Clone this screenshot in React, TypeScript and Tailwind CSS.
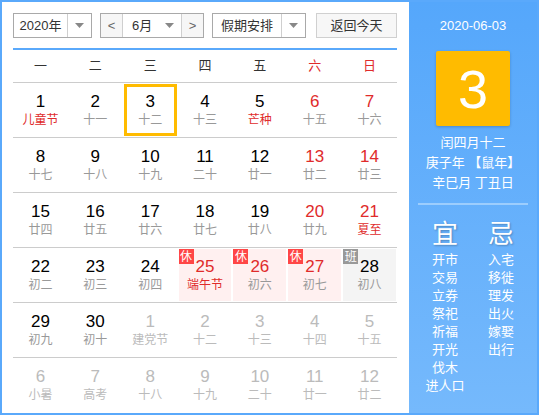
import React from "react";

type Day = {
  n: number;
  l: string;
  red?: boolean; // red day number
  redL?: boolean; // red lunar text
  off?: boolean; // other month
  tag?: "休" | "班";
  sel?: boolean;
};

const rows: Day[][] = [
  [
    { n: 1, l: "儿童节", redL: true },
    { n: 2, l: "十一" },
    { n: 3, l: "十二", sel: true },
    { n: 4, l: "十三" },
    { n: 5, l: "芒种", redL: true },
    { n: 6, l: "十五", red: true },
    { n: 7, l: "十六", red: true },
  ],
  [
    { n: 8, l: "十七" },
    { n: 9, l: "十八" },
    { n: 10, l: "十九" },
    { n: 11, l: "二十" },
    { n: 12, l: "廿一" },
    { n: 13, l: "廿二", red: true },
    { n: 14, l: "廿三", red: true },
  ],
  [
    { n: 15, l: "廿四" },
    { n: 16, l: "廿五" },
    { n: 17, l: "廿六" },
    { n: 18, l: "廿七" },
    { n: 19, l: "廿八" },
    { n: 20, l: "廿九", red: true },
    { n: 21, l: "夏至", red: true, redL: true },
  ],
  [
    { n: 22, l: "初二" },
    { n: 23, l: "初三" },
    { n: 24, l: "初四" },
    { n: 25, l: "端午节", red: true, redL: true, tag: "休" },
    { n: 26, l: "初六", red: true, tag: "休" },
    { n: 27, l: "初七", red: true, tag: "休" },
    { n: 28, l: "初八", tag: "班" },
  ],
  [
    { n: 29, l: "初九" },
    { n: 30, l: "初十" },
    { n: 1, l: "建党节", off: true },
    { n: 2, l: "十二", off: true },
    { n: 3, l: "十三", off: true },
    { n: 4, l: "十四", off: true },
    { n: 5, l: "十五", off: true },
  ],
  [
    { n: 6, l: "小暑", off: true },
    { n: 7, l: "高考", off: true },
    { n: 8, l: "十八", off: true },
    { n: 9, l: "十九", off: true },
    { n: 10, l: "二十", off: true },
    { n: 11, l: "廿一", off: true },
    { n: 12, l: "廿二", off: true },
  ],
];

const weekdays = ["一", "二", "三", "四", "五", "六", "日"];
const yi = ["开市", "交易", "立券", "祭祀", "祈福", "开光", "伐木", "进人口"];
const ji = ["入宅", "移徙", "理发", "出火", "嫁娶", "出行"];

function Caret() {
  return (
    <svg width="9" height="5" viewBox="0 0 9 5">
      <path d="M0 0h9L4.5 5z" fill="#888" />
    </svg>
  );
}

function Cell({ d }: { d: Day }) {
  const numColor = d.off ? "text-[#bbbbbb]" : d.red ? "text-[#e02b2b]" : "text-black";
  const lunColor = d.off ? "text-[#bbbbbb]" : d.redL ? "text-[#e02b2b]" : "text-[#999999]";
  const bg = d.tag === "休" ? "bg-[#fff0f0]" : d.tag === "班" ? "bg-[#f4f4f4]" : "";
  return (
    <div className="relative h-[54px] p-px">
      <div
        className={`relative flex h-full flex-col items-center justify-center ${bg} ${
          d.sel ? "border-[3px] border-[#ffbb00]" : ""
        }`}
      >
        {d.tag && (
          <span
            className={`absolute left-0 top-0 flex h-[15px] w-[15px] items-center justify-center text-[12px] leading-none text-white ${
              d.tag === "休" ? "bg-[#ff4646]" : "bg-[#999999]"
            }`}
          >
            {d.tag}
          </span>
        )}
        <span className={`mt-[1px] text-[17px] leading-[20px] ${numColor}`}>{d.n}</span>
        <span className={`text-[12px] leading-[17px] ${lunColor}`}>{d.l}</span>
      </div>
    </div>
  );
}

export default function App() {
  return (
    <div
      className="flex h-[415px] w-[539px] border-2 border-[#5aa9fb] bg-white"
      style={{ fontFamily: '"Liberation Sans", "Noto Sans CJK SC", sans-serif' }}
    >
      {/* Calendar */}
      <div className="flex w-[407px] flex-col pl-[11px] pr-[12px] pt-[11px]">
        <div className="flex h-[25px] text-[13px] text-[#333]">
          <div className="flex w-[79px] border border-[#a9a9a9]">
            <div className="flex flex-1 items-center justify-center">2020年</div>
            <div className="flex w-[24px] items-center justify-center border-l border-[#cfcfcf]">
              <Caret />
            </div>
          </div>
          <div className="ml-[8px] flex w-[104px] border border-[#a9a9a9]">
            <div className="flex w-[22px] items-center justify-center border-r border-[#cfcfcf] bg-[#f6f6f6] text-[#666]">
              &lt;
            </div>
            <div className="flex flex-1 items-center justify-between pl-[9px] pr-[7px]">
              <span>6月</span>
              <Caret />
            </div>
            <div className="flex w-[22px] items-center justify-center border-l border-[#cfcfcf] bg-[#f6f6f6] text-[#666]">
              &gt;
            </div>
          </div>
          <div className="ml-[8px] flex w-[94px] border border-[#a9a9a9]">
            <div className="flex flex-1 items-center justify-center">假期安排</div>
            <div className="flex w-[24px] items-center justify-center border-l border-[#cfcfcf]">
              <Caret />
            </div>
          </div>
          <div className="ml-[10px] flex w-[81px] items-center justify-center border border-[#d0d0d0] bg-[#f7f7f7]">
            返回今天
          </div>
        </div>

        <div className="mt-[10px] grid h-[34px] grid-cols-7 border-t-[2px] border-[#5aa9fb] text-[13px]">
          {weekdays.map((w, i) => (
            <div
              key={w}
              className={`flex items-center justify-center ${i >= 5 ? "text-[#e02b2b]" : "text-[#333]"}`}
            >
              {w}
            </div>
          ))}
        </div>

        {rows.map((r, ri) => (
          <div key={ri} className="grid grid-cols-7 border-t border-[#cccccc]">
            {r.map((d, di) => (
              <Cell key={di} d={d} />
            ))}
          </div>
        ))}
      </div>

      {/* Side panel */}
      <div className="flex flex-1 flex-col items-center bg-gradient-to-b from-[#55a7fb] to-[#75b9fc] text-white">
        <div className="mt-[15px] text-[13px] leading-[18px]">2020-06-03</div>
        <div className="mt-[16px] flex h-[75px] w-[74px] items-center justify-center rounded-[2px] bg-[#ffbb00] text-[54px] leading-none shadow-[0_1px_3px_rgba(0,0,0,0.2)]">
          3
        </div>
        <div className="mt-[7px] flex flex-col items-center text-[13px] leading-[20px]">
          <span>闰四月十二</span>
          <span>庚子年 【鼠年】</span>
          <span>辛巳月 丁丑日</span>
        </div>
        <div className="mt-[10px] h-[2px] w-[110px] bg-[#9ccdfd]" />
        <div className="mt-[14px] flex w-[112px]">
          <div className="flex w-1/2 flex-col items-center">
            <span className="text-[26px] leading-[30px] [text-shadow:1px_1px_2px_rgba(0,0,0,0.25)]">宜</span>
            <div className="mt-[2px] flex flex-col items-center text-[13px] leading-[18px]">
              {yi.map((t) => (
                <span key={t}>{t}</span>
              ))}
            </div>
          </div>
          <div className="flex w-1/2 flex-col items-center">
            <span className="text-[26px] leading-[30px] [text-shadow:1px_1px_2px_rgba(0,0,0,0.25)]">忌</span>
            <div className="mt-[2px] flex flex-col items-center text-[13px] leading-[18px]">
              {ji.map((t) => (
                <span key={t}>{t}</span>
              ))}
            </div>
          </div>
        </div>
      </div>
    </div>
  );
}
